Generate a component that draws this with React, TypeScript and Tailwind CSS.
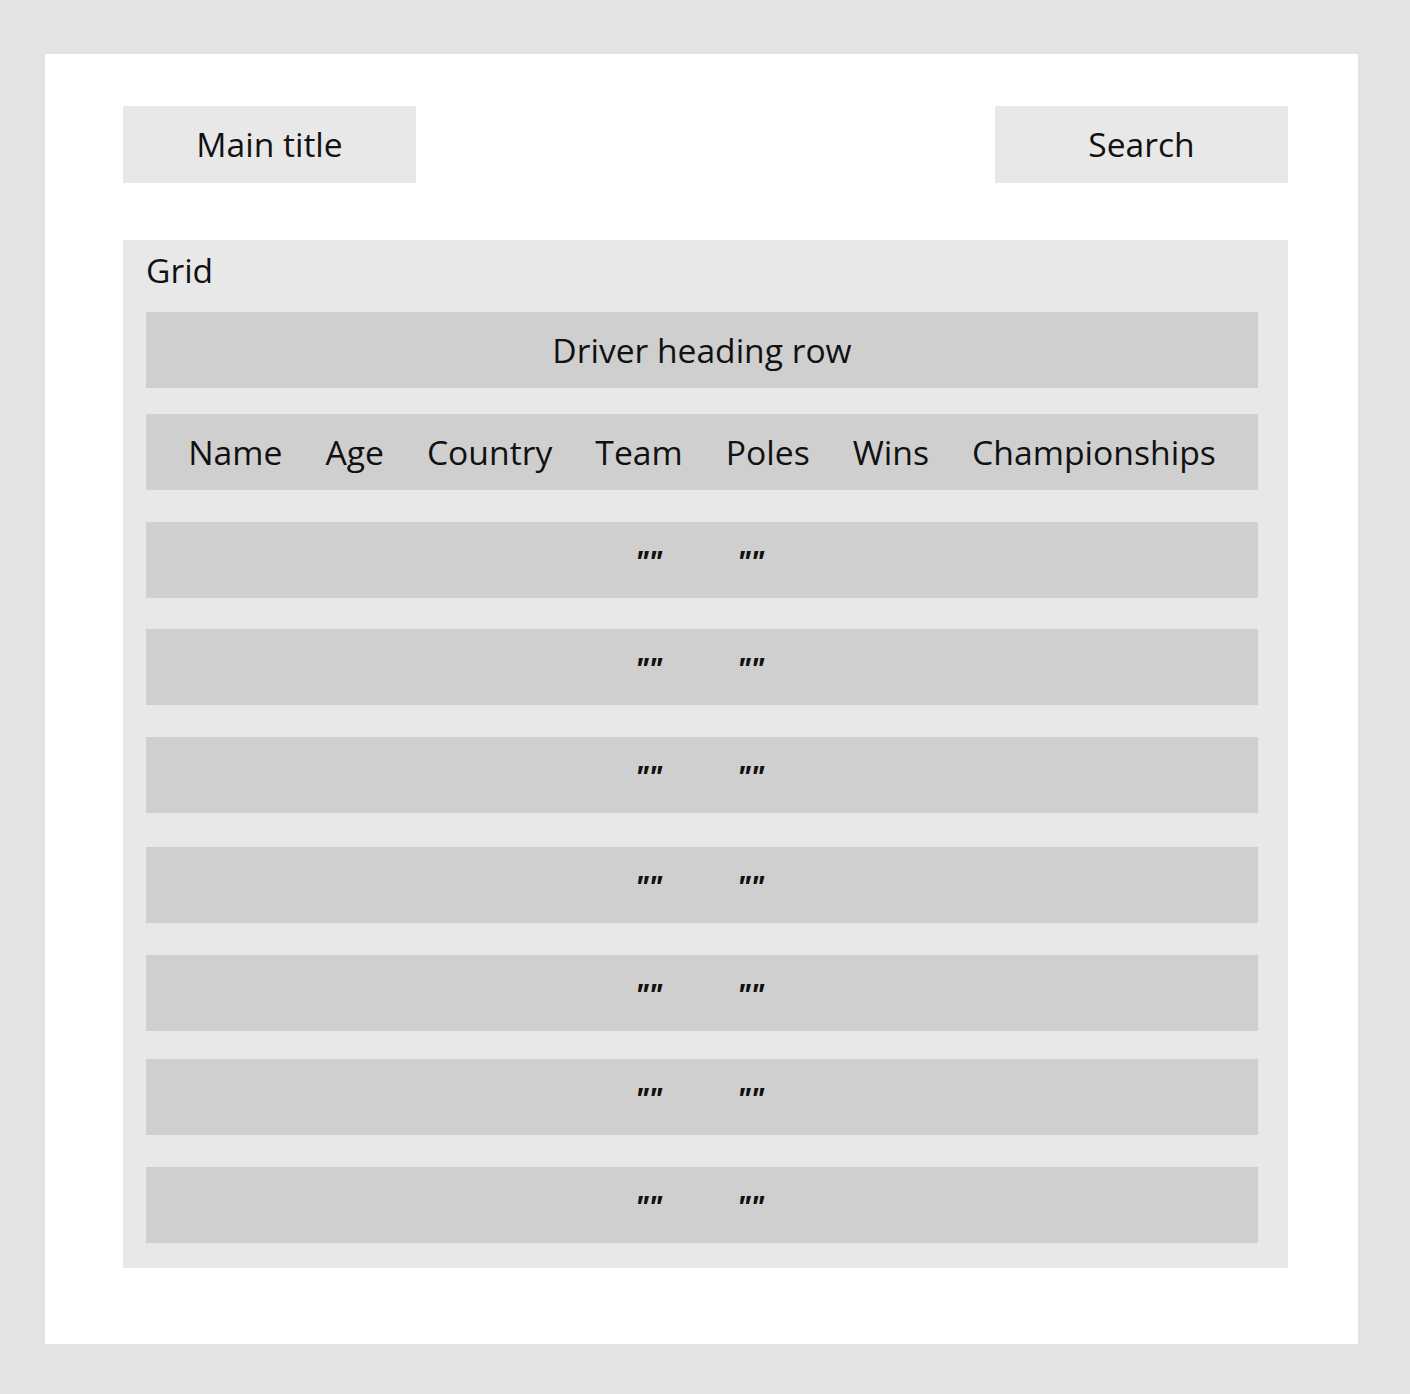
const columns = ["Name", "Age", "Country", "Team", "Poles", "Wins", "Championships"];

// gaps above each data row, taken off the wireframe
const rowGaps = ["mt-[32px]", "mt-[31px]", "mt-[32px]", "mt-[34px]", "mt-[32px]", "mt-[28px]", "mt-[32px]"];

function DataRow({ gap }: { gap: string }) {
  return (
    <div className={`${gap} flex h-[76px] items-center bg-[#cfcfcf]`}>
      <span className="mt-[2px] ml-[489px] w-[102px] text-[30px] font-bold italic leading-[41px]">""</span>
      <span className="mt-[2px] text-[30px] font-bold italic leading-[41px]">""</span>
    </div>
  );
}

export default function App() {
  return (
    <div
      className="h-[1394px] bg-[#e3e3e3] pt-[54px] pl-[45px] text-[#111]"
      style={{ fontFamily: '"Open Sans", "Noto Sans", sans-serif' }}
    >
      <div className="flex h-[1290px] w-[1313px] flex-col bg-white pt-[52px] pl-[78px]">
        <div className="flex w-[1165px] items-center justify-between">
          <div className="flex h-[77px] w-[293px] items-center justify-center bg-[#e8e8e8] text-[33.6px]">
            Main title
          </div>
          <div className="flex h-[77px] w-[293px] items-center justify-center bg-[#e8e8e8] text-[33.6px]">
            Search
          </div>
        </div>

        <div className="mt-[57px] flex h-[1028px] w-[1165px] flex-col bg-[#e8e8e8] pt-[8px] pl-[23px] pr-[30px]">
          <div className="text-[33.6px] leading-[45px]">Grid</div>

          <div className="mt-[19px] flex h-[76px] items-center justify-center bg-[#cfcfcf] text-[33.6px]">
            Driver heading row
          </div>

          <div className="mt-[26px] flex h-[76px] items-center justify-center gap-[43px] bg-[#cfcfcf] text-[33.7px]">
            {columns.map((c) => (
              <span key={c}>{c}</span>
            ))}
          </div>

          {rowGaps.map((g, i) => (
            <DataRow key={i} gap={g} />
          ))}
        </div>
      </div>
    </div>
  );
}
